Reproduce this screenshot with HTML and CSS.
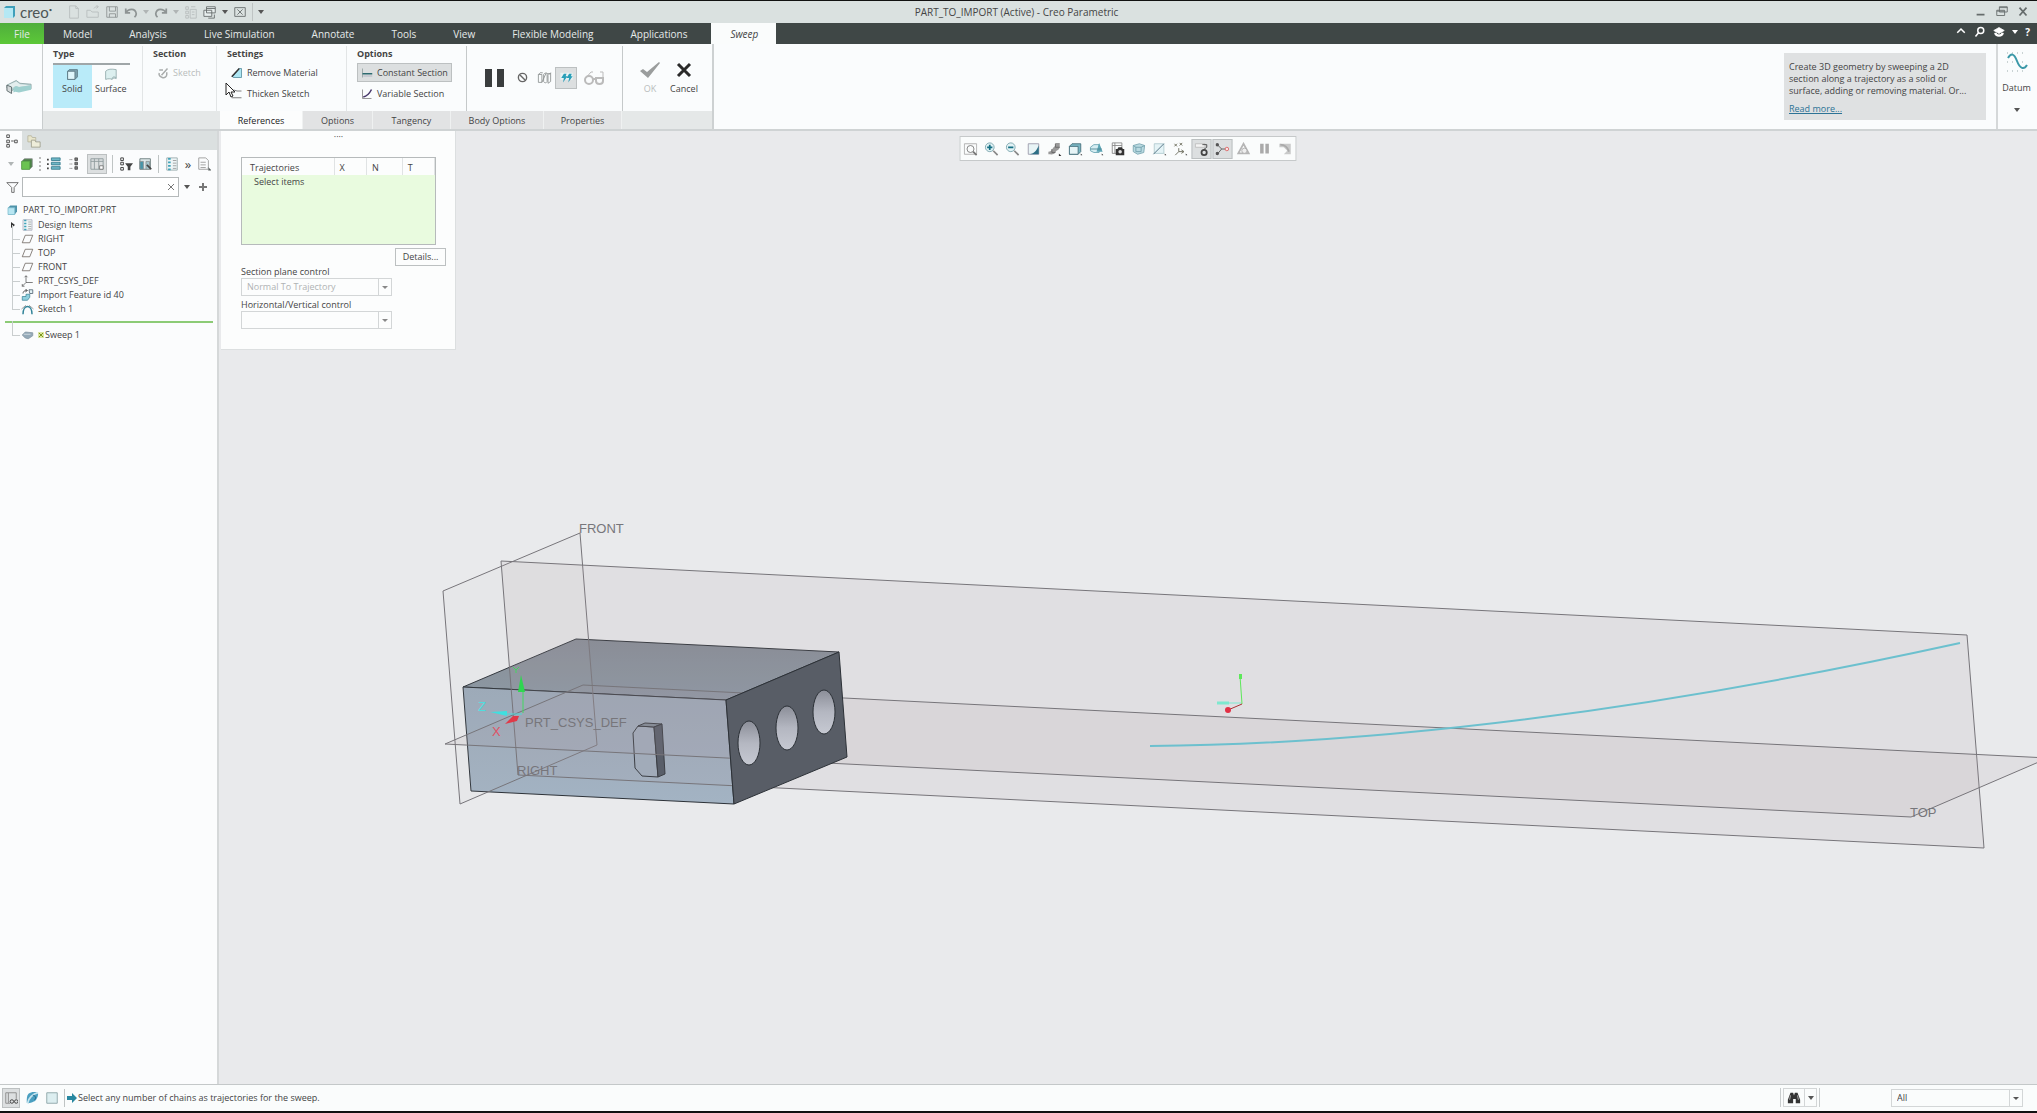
FILE: index.html
```html
<!DOCTYPE html>
<html lang="en">
<head>
    <meta charset="UTF-8">
    <title>PART_TO_IMPORT (Active) - Creo Parametric</title>
    <link rel="stylesheet" href="styles.css">
</head>
<body>
<header class="titlebar">
    <div class="quick">
        <svg class="logo-icon" viewBox="0 0 13 14"><path d="M1 3l2-2h9v10l-2 2H1z" fill="#3f9fba"/><path d="M1 3h9v10H1z" fill="#b5e8f4"/></svg>
        <span class="logo">creo<sup>•</sup></span>
        <button class="ico dim" aria-label="New"><svg viewBox="0 0 16 16"><path d="M3 1h7l3 3v11H3z M10 1v3h3"/></svg></button>
        <button class="ico dim" aria-label="Open"><svg viewBox="0 0 16 16"><path d="M1 14V6h4l2 2h7v6z M9 4c1-2 3-2 5-2m-2-2l2 2-2 2"/></svg></button>
        <button class="ico" aria-label="Save"><svg viewBox="0 0 16 16"><path d="M2 2h12v12H2z M5 2v5h7V2 M5 14v-4h7v4"/></svg></button>
        <button class="ico" aria-label="Undo"><svg viewBox="0 0 16 16"><path d="M2 4v5h5 M2 9c3-5 11-6 12 1 0 2-1 3-2 4" stroke-width="2"/></svg></button>
        <span class="caret dim"></span>
        <button class="ico" aria-label="Redo"><svg viewBox="0 0 16 16"><path d="M14 4v5H9 M14 9C11 4 3 3 2 10c0 2 1 3 2 4" stroke-width="2"/></svg></button>
        <span class="caret dim"></span>
        <button class="ico dim" aria-label="Regenerate"><svg viewBox="0 0 16 16"><path d="M2 2h3v3H2z M2 7h3v3H2z M2 12h3v3H2z M7 5h7v10H7z M9 8h3 M9 11h3 M8 2h5"/></svg></button>
        <button class="ico dark" aria-label="Windows"><svg viewBox="0 0 16 16"><path d="M4 2h10v7H4z M1 6h9v7H1z" fill="#e7eeee"/><path d="M6 15h7v-4 M4 4h10"/></svg></button>
        <span class="caret"></span>
        <button class="ico dark" aria-label="Close window"><svg viewBox="0 0 16 16"><path d="M2 3h12v10H2z M5 5l6 6 M11 5l-6 6"/></svg></button>
        <i class="vsep"></i>
        <span class="caret"></span>
    </div>
    <h1>PART_TO_IMPORT (Active) - Creo Parametric</h1>
    <div class="window-buttons">
        <button class="ico dark" aria-label="Minimize"><svg viewBox="0 0 16 16"><path d="M3 11h9" stroke-width="2"/></svg></button>
        <button class="ico dark" aria-label="Restore"><svg viewBox="0 0 16 16"><path d="M5 2h9v6H5z M2 6h9v6H2z M5 3h9 M2 7h9"/></svg></button>
        <button class="ico dark" aria-label="Close"><svg viewBox="0 0 16 16"><path d="M4 3l8 9 M12 3l-8 9" stroke-width="2"/></svg></button>
    </div>
</header>

<nav class="menubar">
    <a class="file" href="#">File</a>
    <a href="#">Model</a>
    <a href="#">Analysis</a>
    <a href="#">Live Simulation</a>
    <a href="#">Annotate</a>
    <a href="#">Tools</a>
    <a href="#">View</a>
    <a href="#">Flexible Modeling</a>
    <a href="#">Applications</a>
    <a class="active" href="#">Sweep</a>
    <div class="menu-tools">
        <button class="ico white" aria-label="Collapse ribbon"><svg viewBox="0 0 16 16"><path d="M3 9l5-5 5 5" stroke-width="2"/></svg></button>
        <button class="ico white" aria-label="Search"><svg viewBox="0 0 16 16"><circle cx="9" cy="6" r="4" stroke-width="2"/><path d="M6 9l-4 5" stroke-width="2"/></svg></button>
        <button class="ico white" aria-label="Learning"><svg viewBox="0 0 16 16"><path d="M1 6l7-4 7 4-7 4z" fill="#fff"/><path d="M3 9c1 5 9 5 10 0" stroke-width="3"/></svg></button>
        <span class="caret white"></span>
        <button class="help-mark">?</button>
    </div>
</nav>

<section class="ribbon">
    <div class="ribbon-icon">
        <svg viewBox="0 0 28 16"><path d="M1 6l10-5 4 3 12 1v5l-13 1-4-1-4 2-5-3z" fill="#b9d3d4" stroke="#93a9aa"/><path d="M2 6l9-4 4 3 11 1-12 2-4-1-3 2z" fill="#e4eeee"/><path d="M8 9l3-2 3 1 13-2v5l-13 3-4-1-2 1z" fill="#9fd0cf"/><path d="M1 6l5 2v7l-5-3z" fill="#d5dadb" stroke="#5d6a6c"/></svg>
    </div>
    <div class="ribbon-main">
        <div class="groups">
            <div class="group g-type">
                <h2>Type</h2>
                <div class="type-buttons">
                    <button class="big selected"><svg viewBox="0 0 16 16"><path d="M2 4l2-2h10v9l-3 3H2z" fill="#7fa3b0" stroke="#55717d"/><path d="M2 4h9v10H2z" fill="#dff6fb" stroke="#55717d"/></svg>Solid</button>
                    <button class="big"><svg viewBox="0 0 16 16"><path d="M2 4c3-3 7-3 13-2v11c-2-1-4-1-5 1-2-1-5-1-8 0z" fill="#dcefef" stroke="#8ea6a8"/><path d="M10 14c0-3 2-4 5-2" stroke="#8ea6a8"/></svg>Surface</button>
                </div>
            </div>
            <div class="group g-section">
                <h2>Section</h2>
                <button class="row" disabled><svg viewBox="0 0 16 16"><path d="M3 4h5 M13 7v3c0 3-3 5-6 4s-5-3-4-6 M6 11l8-9" stroke="#a9acac" stroke-width="2"/></svg>Sketch</button>
            </div>
            <div class="group g-settings">
                <h2>Settings</h2>
                <button class="row"><svg viewBox="0 0 16 16"><path d="M2 13L11 2h3v12H3z" fill="#aee6f3" stroke="#4c8698"/><path d="M1 13L11 2" stroke="#333" stroke-width="2"/></svg>Remove Material</button>
                <button class="row"><svg viewBox="0 0 16 16"><path d="M1 3h4l3 1h6 M1 13h13" stroke="#555"/></svg>Thicken Sketch</button>
                <svg class="cursor" viewBox="0 0 11 16"><path d="M1 1v12l3-3 2 5 2-1-2-4h4z" fill="#fff" stroke="#222"/></svg>
            </div>
            <div class="group g-options">
                <h2>Options</h2>
                <button class="row pressed"><svg viewBox="0 0 16 16"><path d="M2 2v12" stroke="#8a9a9a"/><path d="M2 9h13" stroke="#2d6a70" stroke-width="2"/><path d="M3 12h12" stroke="#aab"/></svg>Constant Section</button>
                <button class="row"><svg viewBox="0 0 16 16"><path d="M2 2v12h12" stroke="#777"/><path d="M3 12c5-1 8-4 11-10" stroke="#46366a" stroke-width="2"/></svg>Variable Section</button>
            </div>
            <div class="group g-control">
                <button class="pause" aria-label="Pause"><i></i><i></i></button>
                <button class="tool small" aria-label="No preview"><svg viewBox="0 0 16 16"><circle cx="8" cy="8" r="6" stroke="#666" stroke-width="2"/><path d="M4 4l8 8" stroke="#666" stroke-width="2"/></svg></button>
                <button class="tool" aria-label="Unattached preview"><svg viewBox="0 0 16 16"><path d="M1 4h4v9H1z M1 4l2-2h3 M5 13l5-11 M7 4c1-2 3-2 4-1v9c-1 2-3 2-4 0z M12 5l3-3v10l-3 2z M11 3h4" stroke="#8f9393"/></svg></button>
                <button class="tool on" aria-label="Attached preview"><svg viewBox="0 0 16 16"><path d="M1 2h14v8H1z" fill="#e9f2f3"/><path d="M5 3h3L7 6h2l-5 7 1-5H2z M11 3h3l-1 3h2l-5 7 1-5H8z" fill="#299fb8"/></svg></button>
                <button class="tool wide" aria-label="Verify"><svg viewBox="0 0 22 16"><circle cx="6" cy="10" r="4" stroke="#bbb" stroke-width="2"/><path d="M13 8h7v3c0 4-7 4-7 0z M10 9h3" stroke="#bbb" stroke-width="2"/><path d="M2 9l6-7h2 M20 8V2h-3" stroke="#bbb"/></svg></button>
            </div>
            <div class="group g-finish">
                <button class="finish" disabled><svg viewBox="0 0 22 16"><path d="M1 9l3-2 4 3L20 0l1 1L9 16z" fill="#9a9d9d"/></svg>OK</button>
                <button class="finish"><svg viewBox="0 0 22 16"><path d="M5 2l12 12 M17 2L5 14" stroke="#2a2a2a" stroke-width="3"/></svg>Cancel</button>
            </div>
        </div>
        <div class="dash-tabs">
            <button class="dash-tab current">References</button>
            <button class="dash-tab t-options">Options</button>
            <button class="dash-tab t-tangency">Tangency</button>
            <button class="dash-tab t-body">Body Options</button>
            <button class="dash-tab t-props">Properties</button>
        </div>
    </div>
    <aside class="hint">
        <p>Create 3D geometry by sweeping a 2D<br>section along a trajectory as a solid or<br>surface, adding or removing material. Or...</p>
        <a href="#">Read more...</a>
    </aside>
    <button class="datum">
        <svg viewBox="0 0 22 20"><path d="M1 1h20 M1 10h20 M1 19h20" stroke="#9aa" stroke-dasharray="1 4"/><path d="M2 6c3-5 6-5 9 3s7 9 10 4" stroke="#3b98a8" stroke-width="2"/></svg>
        Datum
        <span class="caret"></span>
    </button>
</section>

<main class="workspace">
    <aside class="sidebar">
        <div class="side-tabs">
            <button class="side-tab current" aria-label="Model tree"><svg viewBox="0 0 16 16"><path d="M2 1h3v3H2z M2 7h3v3H2z M2 12h3v3H2z M11 7h3v3h-3z M7 8h3" stroke="#444"/></svg></button>
            <button class="side-tab" aria-label="Folders"><svg viewBox="0 0 16 16"><path d="M1 2h4l1 2h4v5H1z" fill="#e9e6cc" stroke="#b7b6a0"/><path d="M5 7h4l1 2h5v6H5z" fill="#eeedda" stroke="#9f9f8f"/></svg></button>
        </div>
        <div class="side-tools">
            <span class="caret dim"></span>
            <button class="ico" aria-label="Part"><svg viewBox="0 0 16 16"><path d="M2 5l3-3h9v9l-3 3H2z" fill="#4b7f47"/><path d="M2 5h9v9H2z" fill="#6cc352" stroke="#5da94a"/></svg></button>
            <i class="dots"></i>
            <button class="ico" aria-label="Expand"><svg viewBox="0 0 16 16"><path d="M0 2h2v2H0z M0 7h2v2H0z M0 12h2v2H0z" fill="#444" stroke="none"/><path d="M5 1h10v3H5z M5 6h10v3H5z M5 11h10v3H5z" fill="#6fb7c6" stroke="#397e90"/></svg></button>
            <button class="ico" aria-label="Collapse"><svg viewBox="0 0 16 16"><path d="M3 3h3 M3 8h3 M3 13h3" stroke="#555" stroke-dasharray="1 1"/><path d="M9 1h3v3H9z M9 6h3v3H9z M9 11h3v3H9z" fill="#777" stroke="#555"/></svg></button>
            <button class="ico on" aria-label="Columns"><svg viewBox="0 0 16 16"><path d="M1 2h14v12H1z M5 2v12 M10 2v12 M1 5h14" stroke="#8d999b"/><path d="M11 10h4v4h-4z" fill="#fff" stroke="#777"/></svg></button>
            <i class="vsep"></i>
            <button class="ico" aria-label="Tree filter"><svg viewBox="0 0 16 16"><path d="M2 1h3v3H2z M2 6h3v3H2z M2 12h3v3H2z" stroke="#333"/><path d="M7 7h9l-3 4v4h-3v-4z" fill="#444" stroke="none"/></svg></button>
            <button class="ico" aria-label="Tree columns"><svg viewBox="0 0 16 16"><path d="M1 2h12v12H1z" fill="#dfe9eb" stroke="#677"/><path d="M1 5h4v9H1z" fill="#4795a9"/><path d="M8 5h4v9H8z" fill="#a6c8d0"/><path d="M9 9l5 5" stroke="#444" stroke-width="2"/></svg></button>
            <i class="vsep"></i>
            <button class="ico" aria-label="Design items"><svg viewBox="0 0 16 16"><path d="M2 1h12v14H2z" fill="#eef5f6" stroke="#9aabad"/><path d="M5 1v14" stroke="#3fa3b9" stroke-width="3" stroke-dasharray="2 2"/><path d="M9 4h4 M9 7h4 M9 10h4 M9 13h4" stroke="#999"/></svg></button>
            <span class="more">»</span>
            <button class="ico" aria-label="Show"><svg viewBox="0 0 16 16"><path d="M2 1h8l3 3v10H2z M4 6h6 M4 9h6 M4 12h6" stroke="#999"/><path d="M13 12l3 3h-3z" fill="#333"/></svg></button>
        </div>
        <div class="side-search">
            <svg viewBox="0 0 16 16"><path d="M1 2h14L10 8v6H7V8z" stroke="#555"/></svg>
            <label class="search-box">
                <input type="text" aria-label="Search tree">
                <svg viewBox="0 0 8 8"><path d="M1 1l6 6 M7 1L1 7" stroke="#777"/></svg>
            </label>
            <span class="caret"></span>
            <svg class="plus" viewBox="0 0 10 10"><path d="M5 1v8 M1 5h8" stroke="#777" stroke-width="2"/></svg>
        </div>
        <ul class="tree">
            <li class="root"><svg viewBox="0 0 16 16"><path d="M2 5l3-3h9v8l-3 4H2z" fill="#4f93aa"/><path d="M2 5h9v9H2z" fill="#b8e6f2" stroke="#7cbccd"/></svg>PART_TO_IMPORT.PRT</li>
            <li class="open"><svg viewBox="0 0 16 16"><path d="M2 1h12v14H2z" fill="#eef5f6" stroke="#aab"/><path d="M5 1v14" stroke="#3fa3b9" stroke-width="3" stroke-dasharray="2 2"/><path d="M9 4h4 M9 7h4 M9 10h4 M9 13h4" stroke="#999"/></svg>Design Items</li>
            <li><svg viewBox="0 0 16 16"><path d="M5 3h10l-4 10H1z" stroke="#655c55"/></svg>RIGHT</li>
            <li><svg viewBox="0 0 16 16"><path d="M5 3h10l-4 10H1z" stroke="#655c55"/></svg>TOP</li>
            <li><svg viewBox="0 0 16 16"><path d="M5 3h10l-4 10H1z" stroke="#655c55"/></svg>FRONT</li>
            <li><svg viewBox="0 0 16 16"><path d="M6 1v9h9 M6 10l-5 5 M4 3l2-2 2 2 M1 12v3h3" stroke="#555"/></svg>PRT_CSYS_DEF</li>
            <li><svg viewBox="0 0 16 16"><path d="M1 10h5V7h5v4l-3 4H1z" fill="#8fd0de" stroke="#3c8395"/><path d="M10 1h5v5h-4z" fill="#e3f3f6" stroke="#456"/><path d="M2 6c0-3 2-4 5-4 M5 0l3 2-3 2" stroke="#333"/></svg>Import Feature id 40</li>
            <li><svg viewBox="0 0 16 16"><path d="M2 15C2 1 14 1 14 15" stroke="#33859a" stroke-width="2"/><path d="M0 8l6-5 M10 3l6 5" stroke="#888"/></svg>Sketch 1</li>
        </ul>
        <div class="insert-line"></div>
        <ul class="tree pending">
            <li><svg viewBox="0 0 16 16"><path d="M1 8l4-4 10 1v4l-6 4-4-1z" fill="#94a9b8" stroke="#8193a0"/><path d="M3 7h9" stroke="#dde5ea"/></svg><svg class="new" viewBox="0 0 6 6"><path d="M0 0h6v6H0z" fill="#dbe6a0"/><path d="M1 1l4 4 M5 1L1 5" stroke="#7d971c"/></svg>Sweep 1</li>
        </ul>
    </aside>

    <section class="viewport">
        <svg class="scene" viewBox="219 131 1818 953">
            <defs>
                <linearGradient id="topFace" x1="0" y1="0" x2="0" y2="1"><stop offset="0" stop-color="#868c95"/><stop offset="1" stop-color="#8b97a3"/></linearGradient>
                <linearGradient id="frontFace" x1="0" y1="0" x2="0" y2="1"><stop offset="0" stop-color="#9ca9b8"/><stop offset="1" stop-color="#a3b3c3"/></linearGradient>
                <linearGradient id="hole" x1="0" y1="0" x2="0" y2="1"><stop offset="0" stop-color="#8b8e98"/><stop offset=".5" stop-color="#b4b7c1"/><stop offset="1" stop-color="#c6c9d2"/></linearGradient>
            </defs>
            <!-- block: top and front faces -->
            <g class="edge">
                <path d="M463 687L576 639L839 652L726 700z" fill="url(#topFace)"/>
                <path d="M463 687L726 700L734 804L471 791z" fill="url(#frontFace)"/>
                <path d="M633 733L638 726L654 727L658 777L642 776L635 768z" fill="#a0aebd"/>
                <path d="M638 726L645 723L662 724L654 727z" fill="#7c8894"/>
                <path d="M654 727L662 724L665 774L658 777z" fill="#4d5661"/>
            </g>
            <!-- datum planes -->
            <g class="plane">
                <path class="clear" d="M443 591L580 533L597 745L460 804z"/>
                <path d="M501 561L1967 635L1984 848L518 775z"/>
                <path d="M445 744L583 685L2048 758L1911 817z"/>
            </g>
            <!-- block: right face with holes -->
            <g class="edge">
                <path d="M726 700L839 652L847 757L734 804z" fill="#585d66"/>
                <ellipse cx="749" cy="743" rx="11" ry="22" fill="url(#hole)"/>
                <ellipse cx="787" cy="728" rx="11" ry="22" fill="url(#hole)"/>
                <ellipse cx="824" cy="712" rx="11" ry="22" fill="url(#hole)"/>
            </g>
            <path class="curve" d="M1150 746C1420 744 1700 700 1960 643"/>
            <!-- coordinate systems -->
            <path d="M523 713V688" stroke="#43d860"/><path d="M518 692l3-17 4 17z" fill="#2fd650"/>
            <path d="M513 667l3 3 3-3m-3 3v3" stroke="#43d860"/>
            <path d="M507 714h15" stroke="#4adada"/><path d="M490 712l17-1v5z" fill="#3fdfe0"/>
            <path d="M505 724l8-8h6l-2 5z" fill="#e03a48"/>
            <path d="M1240 676l2 28" stroke="#5de85a"/><path d="M1239 674h3v5h-3z" fill="#5de85a"/>
            <path d="M1242 704l-14 6" stroke="#a33"/><circle cx="1228" cy="710" r="3" fill="#e23045"/>
            <path d="M1217 703h12" stroke="#7fe8cf" stroke-width="3"/><path d="M1229 703h12" stroke="#7fe8cf"/>
            <g class="names">
                <text x="579" y="533">FRONT</text>
                <text x="525" y="727">PRT_CSYS_DEF</text>
                <text x="517" y="775">RIGHT</text>
                <text x="1910" y="817">TOP</text>
                <text class="z" x="478" y="711">Z</text>
                <text class="x" x="492" y="736">X</text>
            </g>
        </svg>

        <div class="view-tools">
            <button aria-label="Refit"><svg viewBox="0 0 16 16"><path d="M1 2h14v12H1z" stroke="#aaa"/><circle cx="8" cy="8" r="4" stroke="#777"/><path d="M11 11l4 4" stroke="#777" stroke-width="2"/></svg></button>
            <button aria-label="Zoom in"><svg viewBox="0 0 16 16"><circle cx="6" cy="6" r="5" fill="#e1f2f5" stroke="#79a3ac"/><path d="M10 10l5 5" stroke="#888" stroke-width="2"/><path d="M6 3v6 M3 6h6" stroke="#146f83" stroke-width="2"/></svg></button>
            <button aria-label="Zoom out"><svg viewBox="0 0 16 16"><circle cx="6" cy="6" r="5" fill="#e1f2f5" stroke="#79a3ac"/><path d="M10 10l5 5" stroke="#888" stroke-width="2"/><path d="M3 6h6" stroke="#146f83" stroke-width="2"/></svg></button>
            <button aria-label="Repaint"><svg viewBox="0 0 16 16"><path d="M2 2h12v12H2z" fill="#e8f4f6" stroke="#99a"/><path d="M14 4v10H4c5-1 8-5 10-10z" fill="#2d6f86"/></svg></button>
            <button aria-label="Rendering"><svg viewBox="0 0 16 16"><path d="M9 1h5v5c-1 4-4 3-5 6-2 3-5 2-8 2v-3c4 0 4-3 6-5 2-1 2-3 2-5z" fill="#999"/><path d="M9 2v4h5 M5 8v4h4" stroke="#666"/><path d="M13 13l3 3h-3z" fill="#333"/></svg></button>
            <button aria-label="Display style"><svg viewBox="0 0 16 16"><path d="M1 5l3-3h10v9l-3 3H1z" fill="#79b6c3" stroke="#456e7a"/><path d="M1 5h10v9H1z" fill="#e6f4f6" stroke="#456e7a"/><path d="M14 13l2 2h-2z" fill="#333"/></svg></button>
            <button aria-label="Saved views"><svg viewBox="0 0 16 16"><path d="M1 6l4-3h6v9H5l-4-2z" fill="#d5edf2" stroke="#6ba6b3"/><path d="M11 1l4 10H8z" fill="#5ba5b5"/><path d="M1 8h13" stroke="#4d8592"/><path d="M14 13l2 2h-2z" fill="#333"/></svg></button>
            <button aria-label="View manager"><svg viewBox="0 0 16 16"><path d="M2 1h11v12H2z M2 4h11 M5 1v12" stroke="#888"/><path d="M6 8h2l1-2h4l1 2h2v7H6z" fill="#333"/><circle cx="11" cy="11" r="2" fill="#ddd"/></svg></button>
            <button aria-label="Perspective"><svg viewBox="0 0 16 16"><path d="M2 4l7-2 6 2-1 8-7 2-5-3z" fill="#b9dae1" stroke="#7aa6b1"/><path d="M5 6h6v5H5z M2 4l3 2 M15 4l-4 2" stroke="#6f9fab"/></svg></button>
            <button aria-label="Datum display"><svg viewBox="0 0 16 16"><path d="M2 2h11v11H2z" fill="#e4f3f6" stroke="#b0cacf"/><path d="M1 14L13 2" stroke="#467"/><path d="M14 13l2 2h-2z" fill="#333"/></svg></button>
            <button aria-label="Datum filters"><svg viewBox="0 0 16 16"><path d="M1 2l3 3 M4 2L1 5 M7 1l3 3 M10 1L7 4 M6 7v4h5 M6 11l-4 4 M9 9l3 2-3 2" stroke="#665"/><path d="M14 13l2 2h-2z" fill="#333"/></svg></button>
            <button class="on" aria-label="Annotation display"><svg viewBox="0 0 16 16"><path d="M1 2h11v4H1z" fill="#f4f4f4" stroke="#bbb"/><path d="M9 3h5v3l-4 3" stroke="#444"/><circle cx="11" cy="12" r="3" stroke="#444" stroke-width="2"/></svg></button>
            <button class="on" aria-label="Spin center"><svg viewBox="0 0 16 16"><path d="M2 3l5 5-5 6 M7 8h5" stroke="#555"/><circle cx="2" cy="3" r="2" fill="#555"/><circle cx="2" cy="13" r="2" fill="#555"/><circle cx="13" cy="8" r="2" fill="#fbe3e3" stroke="#d66"/></svg></button>
            <button aria-label="Simulate"><svg viewBox="0 0 16 16"><path d="M8 2l6 11H2z" stroke="#b5b5b5" stroke-width="2"/><circle cx="9" cy="10" r="3" fill="#eee" stroke="#aaa"/></svg></button>
            <button aria-label="Pause simulation"><svg viewBox="0 0 16 16"><path d="M3 2h4v11H3z M9 2h4v11H9z" fill="#aaa"/></svg></button>
            <button aria-label="Simulation results"><svg viewBox="0 0 16 16"><path d="M1 2h13v12H6l4-4-4-4H1z" fill="#c9caca"/><path d="M2 3c5 0 8 2 10 8" stroke="#aaa" stroke-width="2"/></svg></button>
        </div>

        <form class="refs-panel">
            <div class="grip">····</div>
            <div class="list-box">
                <table>
                    <thead><tr><th class="name">Trajectories</th><th>X</th><th>N</th><th>T</th></tr></thead>
                    <tbody><tr><td colspan="4">Select items</td></tr></tbody>
                </table>
            </div>
            <button type="button" class="details">Details...</button>
            <label for="plane">Section plane control</label>
            <div class="combo"><select id="plane" disabled><option>Normal To Trajectory</option></select></div>
            <label for="hv">Horizontal/Vertical control</label>
            <div class="combo"><select id="hv" disabled><option></option></select></div>
        </form>
    </section>
</main>

<footer class="statusbar">
    <button class="ico on" aria-label="Navigator"><svg viewBox="0 0 16 16"><path d="M2 2h3v12H2z M5 2h9v7 M5 14h2" stroke="#888"/><circle cx="9" cy="12" r="2" stroke="#333"/><circle cx="14" cy="12" r="2" stroke="#333"/></svg></button>
    <button class="ico" aria-label="Browser"><svg viewBox="0 0 16 16"><path d="M4 3c4-3 10-2 11 0 0 3-2 8-5 9-4 2-9 3-8 0 0-3 0-7 2-9z" fill="#4a9fc0" stroke="none"/><path d="M3 14C4 8 9 3 15 2" stroke="#c5e4ee" stroke-width="2"/><path d="M9 5c3 0 4 3 2 5" stroke="#1e5f80"/></svg></button>
    <button class="ico" aria-label="Full screen"><svg viewBox="0 0 16 16"><path d="M2 2h12v12H2z" fill="#dceef0" stroke="#8aa3a6"/></svg></button>
    <i class="vsep"></i>
    <p><svg viewBox="0 0 10 10"><path d="M0 3h5V0l5 5-5 5V7H0z" fill="#2787a0"/></svg>Select any number of chains as trajectories for the sweep.</p>
    <div class="find">
        <button aria-label="Find"><svg viewBox="0 0 16 16"><path d="M4 2h3l1 3 1-3h3l3 8v4h-5V9H7v5H1v-4z" fill="#333"/><path d="M3 10l1-5 M12 5l1 5" stroke="#bbb"/></svg></button>
        <button class="drop" aria-label="Find options"><span class="caret"></span></button>
    </div>
    <div class="combo filter"><select aria-label="Selection filter"><option>All</option></select></div>
</footer>
</body>
</html>
```

FILE: styles.css
```css
* {
    box-sizing: border-box;
}
body {
    margin: 0;
    height: 100vh;
    display: flex;
    flex-direction: column;
    overflow: hidden;
    border-top: 1px solid #111;
    border-bottom: 2px solid #111;
    background: #fafcfc;
    color: #444;
    font-family: "Open Sans", "Noto Sans", sans-serif;
    font-size: 9px;
    line-height: 12px;
}
h1, h2, p, ul {
    margin: 0;
    padding: 0;
    font-size: 9px;
}
button, input, select {
    margin: 0;
    padding: 0;
    border: 0;
    border-radius: 0;
    background: none;
    color: inherit;
    font: inherit;
}
svg {
    display: block;
    flex: none;
    fill: none;
}
.ico svg {
    width: 14px;
    height: 14px;
    stroke: #8e9494;
}
.ico.dim svg {
    stroke: #b7bdbd;
}
.ico.dark svg {
    stroke: #666c6c;
}
.ico.white svg {
    width: 12px;
    height: 12px;
    stroke: #fff;
}
.caret {
    flex: none;
    width: 0;
    height: 0;
    border: 3px solid transparent;
    border-top: 4px solid #555;
    border-bottom: 0;
}
.caret.dim {
    border-top-color: #b0b5b5;
}
.caret.white {
    border-top-color: #fff;
}
.vsep {
    width: 1px;
    height: 18px;
    background: #bfc4c4;
}

/* title bar */
.titlebar {
    flex: none;
    display: flex;
    align-items: center;
    height: 22px;
    background: #dae1e0;
}
.quick {
    flex: 1;
    display: flex;
    align-items: center;
    gap: 5px;
    padding-left: 3px;
}
.logo-icon {
    width: 13px;
    height: 14px;
}
.logo {
    width: 42px;
    margin-left: -1px;
    font-family: Lato, sans-serif;
    font-size: 15px;
    line-height: 16px;
    color: #4d5555;
}
.logo sup {
    font-size: 6px;
    line-height: 6px;
}
.titlebar h1 {
    font-size: 10px;
    font-weight: normal;
}
.window-buttons {
    flex: 1;
    display: flex;
    justify-content: flex-end;
    gap: 7px;
    padding-right: 7px;
}

/* menu bar */
.menubar {
    flex: none;
    display: flex;
    height: 21px;
    background: #3f4746;
    font-size: 10px;
    line-height: 22px;
}
.menubar a {
    padding: 0 18px 0 19px;
    color: #e6eaea;
    text-decoration: none;
}
.menubar .file {
    width: 44px;
    padding: 0;
    text-align: center;
    background: linear-gradient(#4fae3c, #5cc838);
}
.menubar .active {
    margin-left: 6px;
    background: #fafcfc;
    color: #444;
    font-style: italic;
}
.menu-tools {
    display: flex;
    align-items: center;
    gap: 7px;
    margin-left: auto;
    padding: 0 7px 3px 0;
}
.help-mark {
    color: #fff;
    font-weight: bold;
}

/* ribbon */
.ribbon {
    flex: none;
    display: flex;
    height: 87px;
    border-bottom: 2px solid #cfd3d4;
    background: #fafcfd;
}
.ribbon-icon {
    display: flex;
    align-items: center;
    width: 43px;
    padding-left: 6px;
    border-right: 1px solid #c9cdce;
}
.ribbon-icon svg {
    width: 26px;
    height: 16px;
}
.ribbon-main {
    display: flex;
    flex-direction: column;
    width: 671px;
    border-right: 2px solid #cdd1d2;
}
.groups {
    flex: 1;
    display: flex;
}
.group {
    position: relative;
    margin-top: 2px;
    padding: 2px 0 0 10px;
    border-right: 1px solid #e2e5e6;
}
.group h2 {
    height: 15px;
}
.g-type {
    width: 100px;
}
.g-section {
    width: 74px;
}
.g-settings {
    width: 130px;
}
.g-options {
    width: 120px;
    border-right-color: #c5c9ca;
}
.g-control {
    display: flex;
    align-items: center;
    width: 156px;
    padding: 0 0 2px 18px;
    border-right-color: #c5c9ca;
}
.g-finish {
    display: flex;
    align-items: center;
    padding: 0 0 0 10px;
    border-right: 0;
}
.type-buttons {
    display: flex;
    width: 77px;
    border-top: 2px solid #9fa6a8;
}
.big {
    display: flex;
    flex-direction: column;
    align-items: center;
    gap: 2px;
    width: 39px;
    height: 43px;
    padding-top: 3px;
}
.big svg {
    width: 13px;
    height: 13px;
}
.big.selected {
    background: #b9ebf9;
}
.row {
    display: flex;
    align-items: center;
    gap: 4px;
    height: 19px;
    margin-bottom: 2px;
    padding: 0 3px;
    border: 1px solid transparent;
    white-space: nowrap;
}
.row svg {
    width: 12px;
    height: 12px;
}
.row:disabled, .finish:disabled {
    color: #b9bcbc;
}
.row.pressed, .tool.on, .ico.on, .view-tools .on {
    border: 1px solid #bcc0c1;
    background: #dcdfe0;
}
.cursor {
    position: absolute;
    left: 8px;
    top: 36px;
    width: 11px;
    height: 16px;
}
.pause {
    display: flex;
    gap: 5px;
    margin-right: 7px;
}
.pause i {
    width: 7px;
    height: 18px;
    background: #3a3d3e;
}
.tool {
    display: flex;
    align-items: center;
    justify-content: center;
    width: 22px;
    height: 22px;
    border: 1px solid transparent;
}
.tool svg {
    width: 15px;
    height: 14px;
}
.tool.small svg {
    width: 11px;
    height: 11px;
}
.tool.wide {
    margin-left: 6px;
}
.tool.wide svg {
    width: 22px;
    height: 16px;
}
.finish {
    display: flex;
    flex-direction: column;
    align-items: center;
    gap: 5px;
    width: 34px;
}
.finish svg {
    width: 22px;
    height: 16px;
}
.dash-tabs {
    display: flex;
    height: 18px;
    padding-left: 177px;
    background: #e5e8e8;
}
.dash-tab {
    padding-top: 2px;
    border-right: 1px solid #eff1f1;
    background: #e2e3e4;
}
.dash-tab.current {
    width: 83px;
    background: #fcfdfd;
    color: #222;
}
.t-options {
    width: 70px;
}
.t-tangency {
    width: 78px;
}
.t-body {
    width: 93px;
}
.t-props {
    width: 78px;
}
.hint {
    width: 202px;
    margin: 9px 10px 9px auto;
    padding: 8px 5px;
    background: #dfe1e2;
    white-space: nowrap;
}
.hint a {
    display: block;
    margin-top: 6px;
    color: #2c7396;
}
.datum {
    display: flex;
    flex-direction: column;
    align-items: center;
    gap: 10px;
    width: 41px;
    padding: 8px 2px 0 0;
    border-left: 2px solid #d5d8d9;
}
.datum svg {
    width: 22px;
    height: 20px;
}
.datum .caret {
    margin-top: 4px;
}

/* workspace */
.workspace {
    flex: 1;
    display: flex;
    min-height: 0;
}
.sidebar {
    flex: none;
    width: 219px;
    border-right: 2px solid #d5d8d9;
    background: #fbfcfd;
}
.side-tabs {
    display: flex;
    height: 19px;
    background: #dbe0e0;
}
.side-tab {
    display: flex;
    align-items: center;
    width: 24px;
    padding-left: 5px;
}
.side-tab.current {
    width: 22px;
    background: #fbfcfd;
}
.side-tab svg {
    width: 14px;
    height: 14px;
}
.side-tools {
    display: flex;
    align-items: center;
    justify-content: space-between;
    height: 27px;
    padding: 0 6px 0 8px;
}
.side-tools .on {
    padding: 2px;
}
.dots {
    height: 14px;
    border-left: 2px dotted #bbb;
}
.more {
    font-size: 13px;
}
.side-search {
    display: flex;
    align-items: center;
    height: 20px;
    padding: 0 9px 0 6px;
}
.side-search > svg {
    width: 13px;
    height: 13px;
}
.search-box {
    flex: 1;
    display: flex;
    align-items: center;
    height: 20px;
    margin: 0 5px 0 3px;
    border: 1px solid #b5b9ba;
    background: #fff;
}
.search-box input {
    flex: 1;
    min-width: 0;
    outline: 0;
}
.search-box svg {
    width: 8px;
    height: 8px;
    margin-right: 3px;
}
.side-search .plus {
    width: 10px;
    height: 10px;
    margin-left: 8px;
}
.tree {
    margin: 5px 0 0 12px;
    list-style: none;
}
.tree li {
    position: relative;
    display: flex;
    align-items: center;
    gap: 4px;
    height: 14px;
    padding-left: 9px;
    white-space: nowrap;
}
.tree li::before {
    content: "";
    position: absolute;
    left: 0;
    top: -7px;
    width: 7px;
    height: 14px;
    border-left: 1px solid #c9cdce;
    border-bottom: 1px solid #c9cdce;
}
.tree .root {
    height: 16px;
    margin-left: -6px;
    padding-left: 0;
}
.tree .root::before {
    display: none;
}
.tree .open::before {
    left: -1px;
    top: 4px;
    width: 0;
    height: 0;
    border: 3px solid transparent;
    border-left: 4px solid #333;
    border-right: 0;
}
.tree svg {
    width: 13px;
    height: 12px;
}
.insert-line {
    height: 2px;
    margin: 5px 4px 0 5px;
    background: #8ccb76;
}
.tree.pending {
    margin-top: 5px;
}
.tree .new {
    width: 6px;
    height: 6px;
    margin-right: -3px;
}

/* graphics area */
.viewport {
    position: relative;
    flex: 1;
    min-width: 0;
    background: #e9eaec;
}
.scene {
    width: 100%;
    height: 100%;
}
.edge {
    stroke: #2c3137;
}
.plane {
    fill: rgba(170, 155, 165, .13);
    stroke: #77757a;
}
.plane .clear {
    fill: rgba(190, 185, 190, .06);
}
.curve {
    stroke: #6cc0ce;
    stroke-width: 2;
}
.names {
    fill: #77767b;
    font-family: "Liberation Sans", sans-serif;
    font-size: 13px;
}
.names .z {
    fill: #4fdede;
}
.names .x {
    fill: #df5266;
}
.view-tools {
    position: absolute;
    top: 5px;
    left: 50%;
    display: flex;
    align-items: center;
    gap: 1px;
    height: 25px;
    border: 1px solid #c6c9ca;
    background: #fafcfc;
    transform: translateX(-50%);
}
.view-tools button {
    display: flex;
    align-items: center;
    justify-content: center;
    width: 20px;
    height: 20px;
}
.view-tools svg {
    width: 14px;
    height: 14px;
}
.refs-panel {
    position: absolute;
    left: 2px;
    top: 0;
    display: flex;
    flex-direction: column;
    width: 235px;
    padding: 0 19px 17px 20px;
    border-right: 1px solid #dcdfe0;
    border-bottom: 1px solid #dcdfe0;
    background: #fcfdfd;
}
.grip {
    height: 26px;
    line-height: 12px;
    text-align: center;
}
.list-box {
    height: 88px;
    border: 1px solid #b6babb;
    background: #e9fbdf;
}
.refs-panel table {
    width: 100%;
    border-collapse: collapse;
    text-align: left;
}
.refs-panel th {
    height: 17px;
    padding: 3px 5px 0;
    border-right: 1px solid #e0e3e4;
    background: #fcfdfd;
    font-weight: normal;
}
.refs-panel .name {
    width: 92px;
    padding-left: 8px;
}
.refs-panel td {
    padding: 1px 12px;
}
.details {
    align-self: flex-end;
    width: 51px;
    height: 18px;
    margin: 3px -10px 0 0;
    border: 1px solid #bcc0c1;
}
.refs-panel label {
    height: 12px;
}
.combo {
    position: relative;
    width: 151px;
    height: 18px;
    margin-bottom: 3px;
    border: 1px solid #d3d6d7;
}
.combo::before {
    content: "";
    position: absolute;
    right: 12px;
    top: 0;
    bottom: 0;
    border-left: 1px solid #d3d6d7;
}
.combo::after {
    content: "";
    position: absolute;
    right: 3px;
    top: 7px;
    border: 3px solid transparent;
    border-top-color: #888;
    border-bottom: 0;
}
.combo select {
    width: 100%;
    height: 100%;
    padding-left: 5px;
    appearance: none;
}
.combo select:disabled {
    color: #b0b3b4;
    opacity: 1;
}

/* status bar */
.statusbar {
    flex: none;
    display: flex;
    align-items: center;
    height: 27px;
    padding: 0 14px 1px 2px;
    border-top: 1px solid #c4c8c9;
    background: #fafcfc;
}
.statusbar .ico {
    margin-right: 4px;
    padding: 1px;
}
.statusbar .on {
    padding: 2px 1px;
}
.statusbar p {
    display: flex;
    align-items: center;
    gap: 1px;
    margin: 0 auto 0 2px;
}
.statusbar p svg {
    width: 10px;
    height: 10px;
}
.find {
    display: flex;
    height: 19px;
    margin-right: 71px;
    padding: 0 2px;
    border: 1px solid #c9cdce;
    border-width: 0 1px;
}
.find button {
    display: flex;
    align-items: center;
    justify-content: center;
    width: 22px;
    border: 1px solid #d3d6d7;
}
.find svg {
    width: 14px;
    height: 14px;
}
.find .drop {
    width: 12px;
    border-left: 0;
}
.filter {
    width: 132px;
    margin: 0;
}
.filter::after {
    border-top-color: #555;
}
```
